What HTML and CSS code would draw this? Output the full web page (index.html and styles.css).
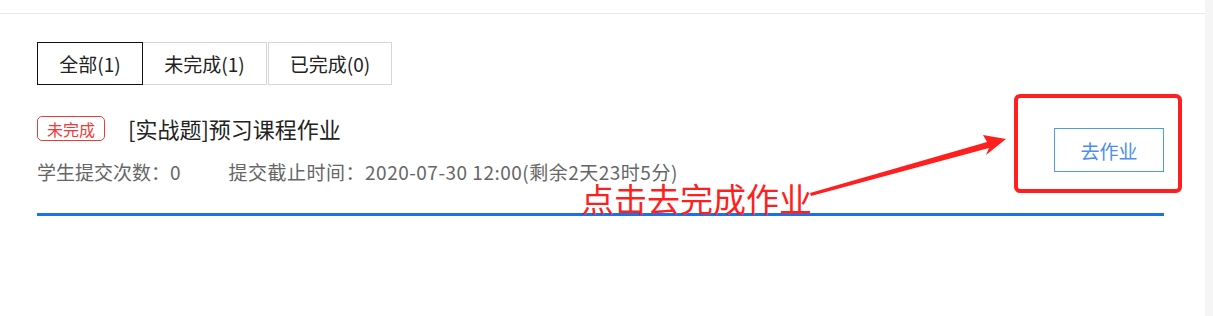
FILE: index.html
```html
<!DOCTYPE html>
<html lang="zh-CN">
<head>
<meta charset="utf-8">
<title>作业</title>
<link rel="stylesheet" href="styles.css">
</head>
<body>
<div class="page">
  <div class="main">
    <div class="topbar"></div>
    <div class="content">
      <div class="tabs">
        <div class="tab tab-active">全部(1)</div>
        <div class="tab tab-mid">未完成(1)</div>
        <div class="tab tab-last">已完成(0)</div>
      </div>
      <div class="task">
        <div class="task-info">
          <div class="title-row">
            <span class="tag">未完成</span>
            <span class="title">[实战题]预习课程作业</span>
          </div>
          <div class="meta">
            <span>学生提交次数：0</span>
            <span class="deadline">提交截止时间：2020-07-30 12:00(剩余2天23时5分)</span>
          </div>
        </div>
        <button class="btn">去作业</button>
      </div>
      <div class="divider"></div>
    </div>
  </div>
  <div class="strip"></div>
  <div class="note-box"></div>
  <svg class="note-arrow" width="1213" height="316" viewBox="0 0 1213 316">
    <polygon points="811,196 989,148 986,155 1006,139 983,135 987,142 810,193" fill="#ff1f1f"/>
  </svg>
  <div class="note-text">点击去完成作业</div>
</div>
</body>
</html>
```
FILE: styles.css
```css
html, body {
  margin: 0;
  padding: 0;
  background: #ffffff;
}
body {
  font-family: "Noto Sans CJK SC", "Liberation Sans", sans-serif;
  color: #222;
}
.page {
  position: relative;
  display: flex;
  width: 1213px;
  height: 316px;
  overflow: hidden;
}
.main {
  width: 1205px;
}
.strip {
  width: 8px;
  background: #f5f5f5;
}
.topbar {
  height: 13px;
  border-bottom: 1px solid #e8e8e8;
}
.content {
  padding: 28px 41px 0 37px;
}
.tabs {
  display: flex;
}
.tab {
  box-sizing: border-box;
  height: 43px;
  display: flex;
  align-items: center;
  justify-content: center;
  font-size: 19px;
  color: #222;
  border: 1px solid #d6d6d6;
}
.tab-active {
  width: 106px;
  border-color: #111;
}
.tab-mid {
  width: 124px;
  border-left: none;
}
.tab-last {
  width: 124px;
  border-left: 1px solid #d6d6d6;
  margin-left: 1px;
}
.task {
  display: flex;
  justify-content: space-between;
  align-items: flex-start;
  margin-top: 31px;
}
.title-row {
  display: flex;
  align-items: center;
  gap: 23px;
  height: 25px;
}
.tag {
  box-sizing: border-box;
  height: 25px;
  width: 68px;
  display: flex;
  align-items: center;
  justify-content: center;
  border: 1px solid #f03a3a;
  border-radius: 5px;
  color: #f03a3a;
  font-size: 16px;
  line-height: 1;
}
.title {
  font-size: 22px;
  line-height: 25px;
  color: #222;
}
.meta {
  display: flex;
  gap: 48px;
  margin-top: 21px;
  font-size: 19px;
  line-height: 20px;
  height: 20px;
  color: #666;
}
.deadline {
  letter-spacing: 0.5px;
}
.btn {
  box-sizing: border-box;
  margin-top: 12px;
  width: 110px;
  height: 44px;
  background: #fff;
  border: 1px solid #4d9af2;
  color: #4a8ef0;
  font-family: inherit;
  font-size: 19px;
  padding: 0;
}
.divider {
  margin-top: 31px;
  height: 3px;
  background: #1a72e8;
}
.note-box {
  position: absolute;
  left: 1014px;
  top: 94px;
  width: 168px;
  height: 99px;
  box-sizing: border-box;
  border: 4px solid #ff1f1f;
  border-radius: 6px;
}
.note-arrow {
  position: absolute;
  left: 0;
  top: 0;
}
.note-text {
  position: absolute;
  left: 581px;
  top: 183px;
  font-size: 33px;
  line-height: 30px;
  color: #ff1f1f;
  white-space: nowrap;
}
```
